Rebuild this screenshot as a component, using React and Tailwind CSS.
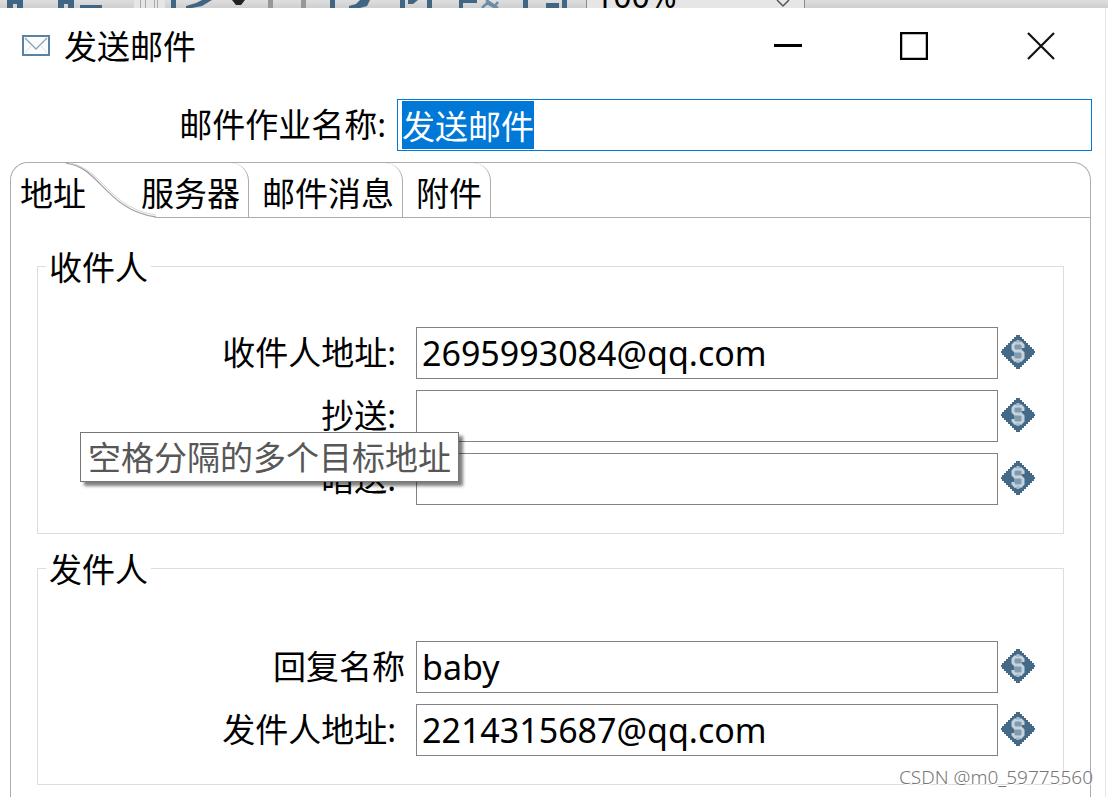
import { useEffect, useRef } from 'react'

const tabs = ['地址', '服务器', '邮件消息', '附件']

function MailIcon() {
  return (
    <svg width="28" height="21" viewBox="0 0 28 21" fill="none" aria-hidden="true">
      <rect x="1" y="1" width="26" height="19" fill="#fbfcfd" stroke="#5b82a0" strokeWidth="2" />
      <path d="M3 3 L14 14 L25 3" stroke="#8ba5b8" strokeWidth="1.4" />
      <path d="M3 18 L9 11 M25 18 L19 11" stroke="#dbe4ea" strokeWidth="1" />
    </svg>
  )
}

function VariableIcon() {
  return (
    <svg width="34" height="34" viewBox="0 0 34 34" className="mb-0.5 ml-[3px] shrink-0" aria-hidden="true">
      <path
        d="M15 0H19V2H21V4H23V6H25V8H27V10H29V12H31V14H33V16H34V18H33V20H31V22H29V24H27V26H25V28H23V30H21V32H19V34H15V32H13V30H11V28H9V26H7V24H5V22H3V20H1V18H0V16H1V14H3V12H5V10H7V8H9V6H11V4H13V2H15Z"
        fill="#446a88"
      />
      <path d="M13 7H21V27H13Z" fill="#7f9bb0" />
      <path
        d="M22 13V10L20 8H14L12 10V14L14 16H20L22 18V23L20 25H14L12 23V21"
        fill="none"
        stroke="#c6d3dd"
        strokeWidth="3"
      />
      <path d="M17 5V8M17 25V28" stroke="#a9bccb" strokeWidth="3" />
    </svg>
  )
}

function Toolbar() {
  return (
    <div className="flex h-2 items-end overflow-hidden bg-linear-to-b from-[#dedede] to-[#cfcfcf]">
      <svg width="586" height="8" viewBox="0 0 586 8" className="shrink-0" aria-hidden="true">
        <path d="M134 0H165V8H134Z" fill="#e6e6e6" />
        <path
          d="M7 8V0H23V8H17V4H13V8Z M58 8V0H74V8H68V4H64V8Z M80 5H102V8H80Z M171 0H176V8H171Z M186 6L196 3L202 0H212L202 6L192 8H186Z M330 0H335V8H330Z M349 6L356 4L360 0H370L367 6L360 8H349Z M400 0H405V8H400Z M408 0H418L413 4H408Z M427 0H432V8H427Z M459 0H477V3H463V8H459Z M523 0H528V8H523Z M546 3H559V8H546Z M562 0H567V8H562Z"
          fill="#416684"
        />
        <path d="M498 8L486 0M482 8L487 3L494 7L498 2" stroke="#6d8ba3" strokeWidth="2.5" fill="none" />
        <path d="M140.5 0V8M145.5 0V8M154.5 0V8M157.5 0V8" stroke="#a8a8a8" />
        <path d="M268 0H273V8H268Z M301 0H306V8H301Z" fill="#979797" />
        <path d="M232 0H245L241 5H236Z" fill="#222" />
      </svg>
      <div className="relative w-[219px] shrink-0 border-x border-[#8a8a8a] bg-[#e6e6e6]">
        <select
          aria-label="缩放"
          className="block h-6 w-full appearance-none pl-2 text-[32px] leading-6 text-black outline-none"
        >
          <option>100%</option>
        </select>
        <svg width="14" height="8" viewBox="0 0 14 8" className="absolute right-3.5 bottom-0" aria-hidden="true">
          <path d="M1 0L7 6L13 0" fill="none" stroke="#555" strokeWidth="1.5" />
        </svg>
      </div>
    </div>
  )
}

function TitleBar() {
  return (
    <header className="flex h-[75px] items-center pr-px pl-[22px]">
      <MailIcon />
      <h1 className="ml-3.5 flex-1 pt-0.5 text-[33px] leading-[44px]">发送邮件</h1>
      <button type="button" aria-label="最小化" className="flex w-[126px] justify-center">
        <svg width="28" height="28" viewBox="0 0 28 28">
          <path d="M0 13.5H28" stroke="#000" strokeWidth="3" />
        </svg>
      </button>
      <button type="button" aria-label="最大化" className="flex w-[126px] justify-center">
        <svg width="28" height="28" viewBox="0 0 28 28">
          <rect x="1" y="1" width="26" height="26" fill="none" stroke="#000" strokeWidth="2.5" />
        </svg>
      </button>
      <button type="button" aria-label="关闭" className="flex w-[127px] justify-center">
        <svg width="28" height="28" viewBox="0 0 28 28">
          <path d="M1 1L27 27M27 1L1 27" stroke="#111" strokeWidth="2.2" />
        </svg>
      </button>
    </header>
  )
}

function TabBar() {
  return (
    <div>
      <div role="tablist" className="flex h-[54px] text-[33px] leading-[44px]">
        {tabs.map((tab, i) =>
          i === 0 ? (
            <button key={tab} type="button" role="tab" aria-selected="true" className="relative w-[130px] pt-2 pl-[9px] text-left">
              {tab}
              <svg
                width="91"
                height="56"
                viewBox="0 0 91 56"
                fill="none"
                className="absolute -top-px left-[55px]"
                aria-hidden="true"
              >
                <path d="M0 1C34 5 40 48 90 55" stroke="#a4a4a4" strokeWidth="1.3" />
                <path d="M3 1C38 7 42 46 90 53" stroke="#d4d4d4" />
              </svg>
            </button>
          ) : (
            <button
              key={tab}
              type="button"
              role="tab"
              aria-selected="false"
              className={
                i === 1
                  ? 'rounded-tr-[18px] border-r border-[#acacac] pt-2 pr-2'
                  : 'rounded-tr-[18px] border-r border-[#acacac] pt-2 pr-2 pl-[13px]'
              }
            >
              {tab}
            </button>
          )
        )}
      </div>
      <div className="ml-[145px] h-px bg-[#acacac]" />
    </div>
  )
}

function Group({ title, children }) {
  return (
    <fieldset className="border border-[#dedede] pr-7 pb-7">
      <legend className="ml-2 px-[3px] pt-1 text-[33px] leading-[44px]">{title}</legend>
      {children}
    </fieldset>
  )
}

function Field({ id, label, value, tip }) {
  return (
    <div className="relative flex items-center">
      <label
        htmlFor={id}
        className={
          label.endsWith(':')
            ? 'w-[367px] shrink-0 pr-[9px] text-right text-[33px] leading-[44px]'
            : 'w-[367px] shrink-0 text-right text-[33px] leading-[44px]'
        }
      >
        {label}
      </label>
      <input
        id={id}
        type="text"
        defaultValue={value}
        className="ml-[11px] h-[52px] min-w-0 flex-1 border border-[#828282] bg-white px-[5px] text-[34px] leading-[44px] outline-none"
      />
      <VariableIcon />
      {tip && (
        <div
          role="tooltip"
          className="absolute top-[42px] left-[42px] z-10 border border-[#767676] bg-white px-[7px] pt-[3px] pb-px text-[33px] leading-[44px] whitespace-nowrap text-[#575757] shadow-[4px_4px_3px_rgba(0,0,0,0.5)]"
        >
          {tip}
        </div>
      )}
    </div>
  )
}

export default function App() {
  const nameRef = useRef(null)

  useEffect(() => {
    nameRef.current.focus()
    nameRef.current.select()
  }, [])

  return (
    <div
      lang="zh-CN"
      className="relative flex min-h-screen flex-col overflow-hidden bg-white font-['Noto_Sans','Noto_Sans_CJK_SC',sans-serif] text-black"
    >
      <Toolbar />
      <main className="mr-[2px] flex flex-1 flex-col border-r border-[#e4e4e4]">
        <TitleBar />
        <div className="mt-4 mr-[13px] flex items-center">
          <label htmlFor="job-name" className="w-[386px] shrink-0 text-right text-[33px] leading-[44px]">
            邮件作业名称:
          </label>
          <input
            id="job-name"
            ref={nameRef}
            type="text"
            defaultValue="发送邮件"
            className="ml-[11px] h-[52px] min-w-0 flex-1 border border-[#0078d7] bg-white px-1 text-[33px] leading-[44px] outline-none selection:bg-[#0078d7] selection:text-white"
          />
        </div>

        <div className="mt-[11px] mr-[14px] ml-2.5 flex-1 rounded-t-[18px] border-x border-t border-[#acacac]">
          <TabBar />
          <div className="flex flex-col gap-2.5 px-[26px] pt-6 pb-3">
            <Group title="收件人">
              <div className="flex flex-col gap-[11px] pt-[37px]">
                <Field id="to" label="收件人地址:" value="2695993084@qq.com" />
                <Field id="cc" label="抄送:" value="" tip="空格分隔的多个目标地址" />
                <Field id="bcc" label="暗送:" value="" />
              </div>
            </Group>
            <Group title="发件人">
              <div className="flex flex-col gap-[11px] pt-[49px]">
                <Field id="reply-name" label="回复名称" value="baby" />
                <Field id="from" label="发件人地址:" value="2214315687@qq.com" />
              </div>
            </Group>
          </div>
        </div>
      </main>
      <p className="absolute right-[15px] bottom-1.5 font-['Noto_Sans',sans-serif] text-[19px] leading-7 font-light text-[#777] [text-shadow:1px_1px_0_#fff]">
        CSDN @m0_59775560
      </p>
    </div>
  )
}
